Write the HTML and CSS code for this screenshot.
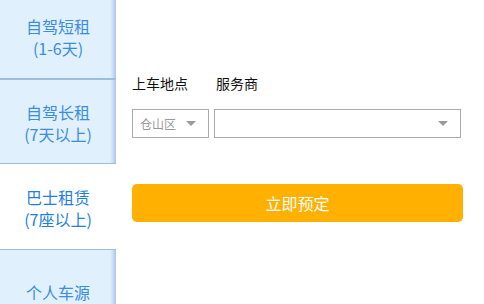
FILE: index.html
```html
<!DOCTYPE html>
<html lang="zh-CN">
<head>
	<meta charset="UTF-8">
	<title>租车预定</title>
	<link rel="stylesheet" href="styles.css">
</head>
<body>
	<div class="page">
		<ul class="tabs">
			<li class="tab tab-first">自驾短租<br>(1-6天)</li>
			<li class="tab tab-second">自驾长租<br>(7天以上)</li>
			<li class="tab is-active">巴士租赁<br>(7座以上)</li>
			<li class="tab tab-last">个人车源</li>
		</ul>
		<div class="form">
			<div class="labels">
				<span class="label label-place">上车地点</span>
				<span class="label">服务商</span>
			</div>
			<div class="selects">
				<div class="select select-area">
					<span class="select-text">仓山区</span>
					<span class="caret"></span>
				</div>
				<div class="select select-vendor">
					<span class="select-text"></span>
					<span class="caret"></span>
				</div>
			</div>
			<button class="book">立即预定</button>
		</div>
	</div>
</body>
</html>
```

FILE: styles.css
```css
* {
	box-sizing: border-box;
}
body {
	margin: 0;
	background: #fff;
	font-family: "Noto Sans CJK SC", "Noto Sans", sans-serif;
}
.page {
	display: flex;
	height: 304px;
	overflow: hidden;
}
.tabs {
	list-style: none;
	margin: 0;
	padding: 0;
	width: 116px;
	flex-shrink: 0;
}
.tab {
	display: flex;
	align-items: center;
	justify-content: center;
	text-align: center;
	font-size: 16px;
	line-height: 22px;
	color: #3b8de0;
	background: linear-gradient(to right, #e1f0fd calc(100% - 6px), #c9def5 calc(100% - 3px), #a8c4e6);
}
.tab-first {
	height: 80px;
	padding-bottom: 4px;
	border-bottom: 2px solid #9dbde0;
}
.tab-second {
	height: 84px;
	border-bottom: 1px solid #9dbde0;
	padding-top: 2px;
}
.tab.is-active {
	height: 85px;
	background: #fff;
	color: #1f7fe0;
	padding-top: 2px;
}
.tab-last {
	height: 60px;
	border-top: 1px solid #9dbde0;
	align-items: flex-start;
	padding-top: 31px;
}
.form {
	flex: 1;
	padding: 73px 21px 0 16px;
}
.labels {
	display: flex;
	font-size: 14px;
	line-height: 20px;
	color: #111;
}
.label-place {
	width: 84px;
}
.selects {
	display: flex;
	gap: 5px;
	margin: 16px 2px 0 0;
}
.select {
	display: flex;
	align-items: center;
	justify-content: space-between;
	height: 29px;
	border: 1px solid #aaa;
	padding: 0 12px 0 7px;
	font-size: 12px;
	color: #999;
}
.select-area {
	width: 77px;
}
.select-vendor {
	flex: 1;
}
.caret {
	width: 0;
	height: 0;
	border-left: 5px solid transparent;
	border-right: 5px solid transparent;
	border-top: 5px solid #999;
}
.book {
	display: block;
	width: 100%;
	height: 38px;
	margin-top: 46px;
	border: 0;
	border-radius: 5px;
	background: #ffb000;
	color: #fff;
	font-family: inherit;
	font-size: 16px;
}
```
